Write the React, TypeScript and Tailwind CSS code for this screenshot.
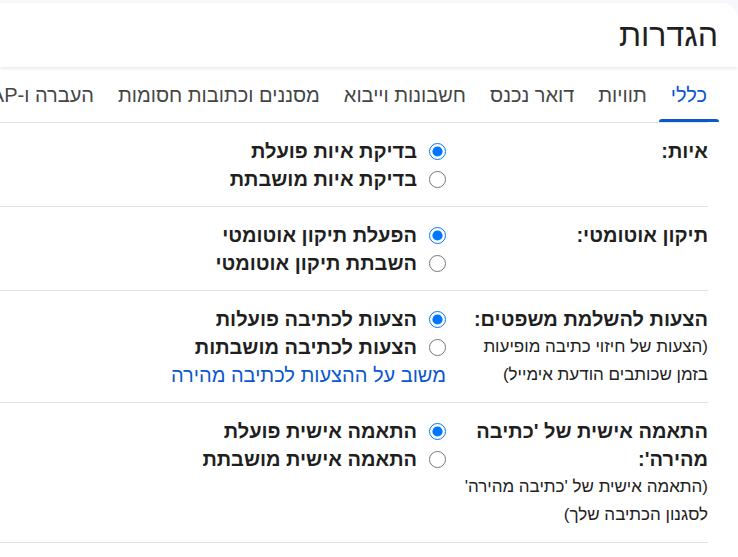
import React from "react";

const font = { fontFamily: '"Liberation Sans", "DejaVu Sans", Arial, sans-serif' };

const tabs = [
  "כללי",
  "תוויות",
  "דואר נכנס",
  "חשבונות וייבוא",
  "מסננים וכתובות חסומות",
  "העברה ו-POP/IMAP",
  "תוספים",
  "צ'אט ו-Meet",
];

type Row = {
  label: string[];
  desc?: string[];
  options: [string, string];
  link?: string;
  name: string;
};

const rows: Row[] = [
  { name: "spell", label: ["איות:"], options: ["בדיקת איות פועלת", "בדיקת איות מושבתת"] },
  { name: "auto", label: ["תיקון אוטומטי:"], options: ["הפעלת תיקון אוטומטי", "השבתת תיקון אוטומטי"] },
  {
    name: "smart",
    label: ["הצעות להשלמת משפטים:"],
    desc: ["(הצעות של חיזוי כתיבה מופיעות", "בזמן שכותבים הודעת אימייל)"],
    options: ["הצעות לכתיבה פועלות", "הצעות לכתיבה מושבתות"],
    link: "משוב על ההצעות לכתיבה מהירה",
  },
  {
    name: "personal",
    label: ["התאמה אישית של 'כתיבה", "מהירה':"],
    desc: ["(התאמה אישית של 'כתיבה מהירה'", "לסגנון הכתיבה שלך)"],
    options: ["התאמה אישית פועלת", "התאמה אישית מושבתת"],
  },
];

export default function App() {
  return (
    <div dir="rtl" style={font} className="w-[738px] h-[557px] overflow-hidden bg-[#f6f8fc] pt-[3px]">
      <div className="h-full bg-white rounded-tr-[16px] flex flex-col">
        <div className="h-[64px] flex items-center pr-[20px] shadow-[0_2px_3px_rgba(0,0,0,0.08)] relative z-10">
          <h1 className="text-[32px] text-[#1f1f1f] font-normal leading-none">הגדרות</h1>
        </div>
        <div className="h-[55px] flex items-stretch pr-[19px] whitespace-nowrap overflow-hidden">
          {tabs.map((t, i) => (
            <div
              key={t}
              className={`relative px-[12px] flex items-center text-[20px] ${
                i === 0 ? "text-[#0b57d0]" : "text-[#444746]"
              }`}
            >
              {t}
              {i === 0 && (
                <div className="absolute bottom-0 left-0 right-0 h-[3px] bg-[#0b57d0] rounded-t-[3px]" />
              )}
            </div>
          ))}
        </div>
        <div className="mr-[30px] border-t border-[#e3e3e3]">
          {rows.map((r) => (
            <div key={r.name} className="flex border-b border-[#e3e3e3] pt-[14px] pb-[13px] leading-[28px]">
              <div className="w-[245px] shrink-0 text-[#1f1f1f] whitespace-nowrap">
                {r.label.map((l) => (
                  <div key={l} className="font-bold text-[20px]">
                    {l}
                  </div>
                ))}
                {r.desc?.map((d) => (
                  <div key={d} className="text-[17px] text-[#222222]">
                    {d}
                  </div>
                ))}
              </div>
              <div className="mr-[17px] text-[#1f1f1f] whitespace-nowrap">
                {r.options.map((o, i) => (
                  <label key={o} className="flex items-center h-[28px] font-bold text-[20px]">
                    <input
                      type="radio"
                      name={r.name}
                      defaultChecked={i === 0}
                      className="w-[17px] h-[17px] m-0 shrink-0"
                    />
                    <span className="mr-[12px]">{o}</span>
                  </label>
                ))}
                {r.link && <div className="text-[20px] text-[#0b57d0]">{r.link}</div>}
              </div>
            </div>
          ))}
        </div>
      </div>
    </div>
  );
}
